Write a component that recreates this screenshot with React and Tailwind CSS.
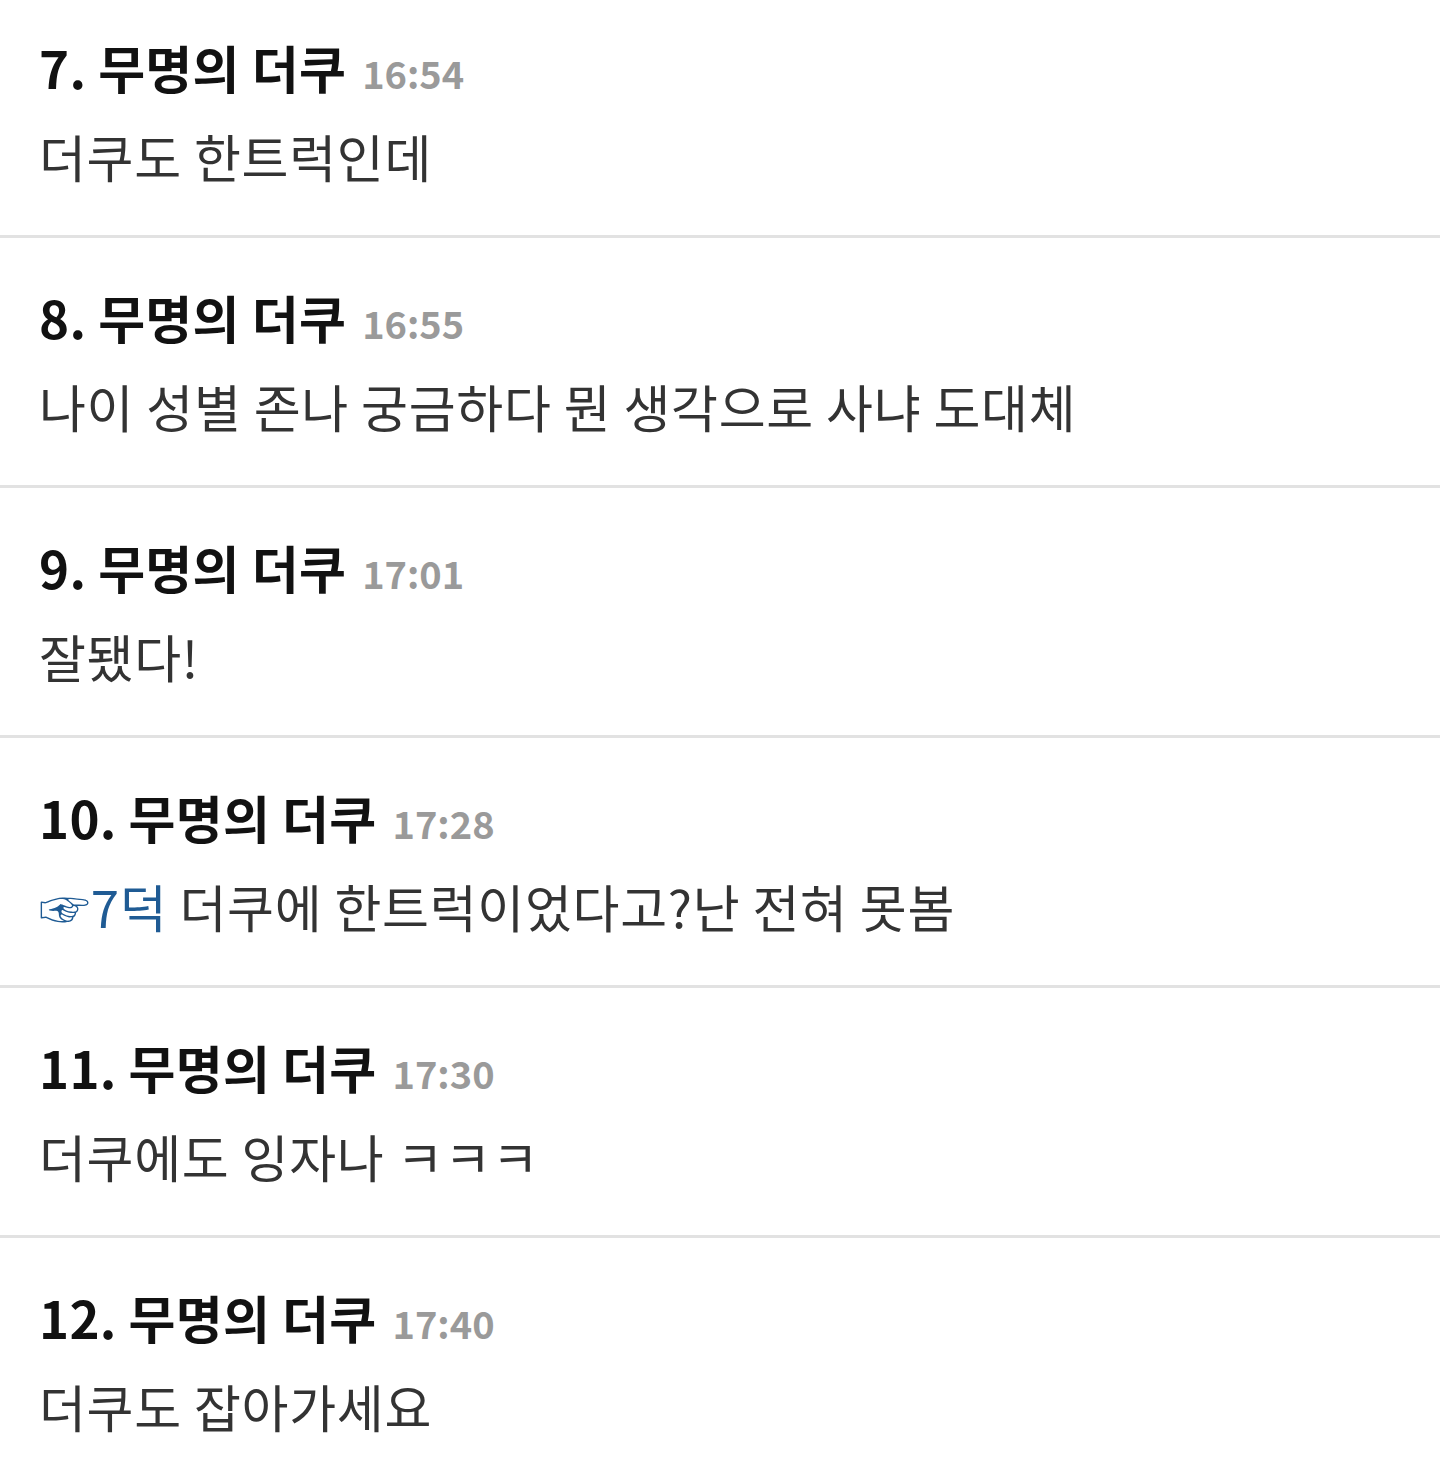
import React from "react";

const comments = [
  { no: 7, time: "16:54", body: "더쿠도 한트럭인데" },
  { no: 8, time: "16:55", body: "나이 성별 존나 궁금하다 뭔 생각으로 사냐 도대체" },
  { no: 9, time: "17:01", body: "잘됐다!" },
  { no: 10, time: "17:28", ref: "7덕", body: " 더쿠에 한트럭이었다고?난 전혀 못봄" },
  { no: 11, time: "17:30", body: "더쿠에도 잉자나 ㅋㅋㅋ" },
  { no: 12, time: "17:40", body: "더쿠도 잡아가세요" },
];

function Comment({ c }) {
  return (
    <li className="h-[250px] border-b-[3px] border-[#e2e2e2] pl-[39px] pt-[46px]">
      <div className="flex items-baseline leading-[67px]">
        <span className="text-[51px] font-bold tracking-[0.3px] text-[#111]">
          {c.no}. 무명의 더쿠
        </span>
        <span className="ml-[16px] text-[38px] font-bold text-[#9a9a9a]">{c.time}</span>
      </div>
      <p className="mt-[17px] text-[51px] leading-[67px] tracking-[0.7px] text-[#333]">
        {c.ref && <span className="text-[#1f5b94]">☞{c.ref}</span>}
        {c.body}
      </p>
    </li>
  );
}

export default function App() {
  return (
    <div
      className="min-h-[1471px] overflow-hidden bg-white"
      style={{ fontFamily: '"Noto Sans CJK KR", "Noto Sans", sans-serif' }}
    >
      <ul className="-mt-[12px]">
        {comments.map((c) => (
          <Comment key={c.no} c={c} />
        ))}
      </ul>
    </div>
  );
}
